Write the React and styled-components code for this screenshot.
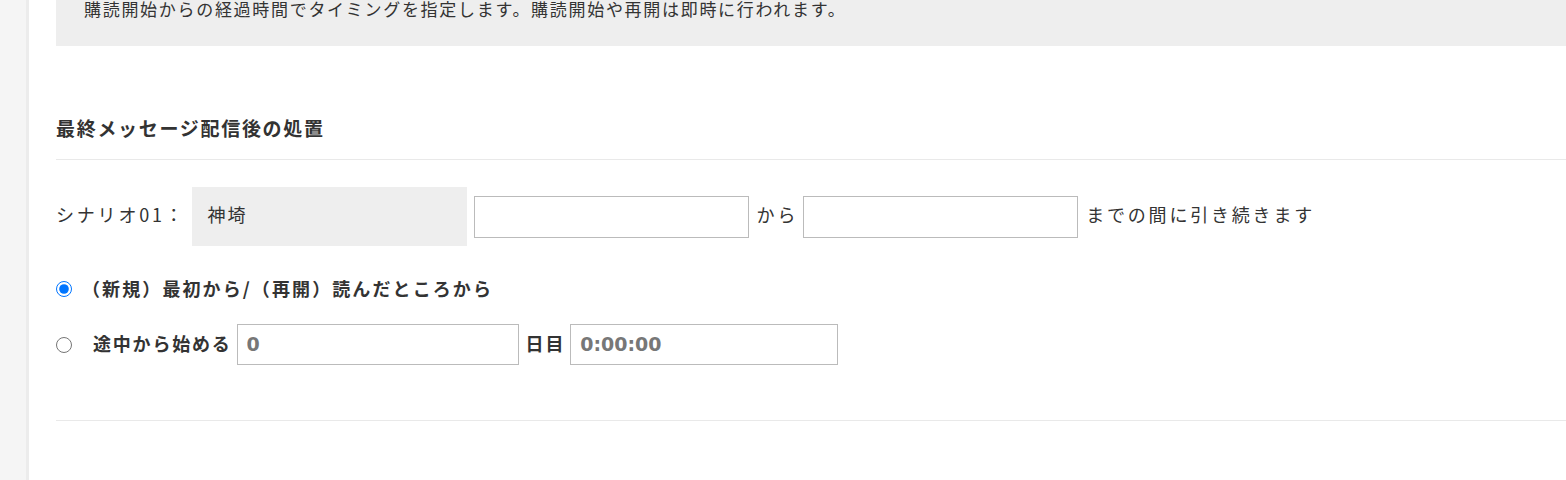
import React from 'react';
import styled, { createGlobalStyle } from 'styled-components';

const Global = createGlobalStyle`
  html, body { margin: 0; padding: 0; background: #fff; }
  body {
    font-family: "Noto Sans CJK JP", "Noto Sans", sans-serif;
    color: #333;
  }
  * { box-sizing: border-box; }
`;

const Page = styled.div`
  display: flex;
  min-height: 480px;
  overflow: hidden;
`;

const Sidebar = styled.aside`
  width: 29px;
  flex-shrink: 0;
  background: #f5f5f5;
  border-right: 3px solid #ececec;
`;

const Main = styled.main`
  flex: 1;
  padding-left: 27px;
  display: flex;
  flex-direction: column;
`;

const Notice = styled.div`
  background: #eeeeee;
  height: 46px;
  padding: 0 28px;
  font-size: 17px;
  line-height: 17px;
  letter-spacing: 1.7px;
  color: #333;
  white-space: nowrap;
`;

const Heading = styled.h2`
  margin: 68px 0 0;
  padding-bottom: 17px;
  border-bottom: 1px solid #e9e9e9;
  font-size: 19px;
  line-height: 28px;
  font-weight: 700;
  letter-spacing: 1.7px;
  color: #333;
`;

const ScenarioRow = styled.div`
  margin-top: 27px;
  display: flex;
  align-items: center;
  height: 59px;
  font-size: 18px;
  letter-spacing: 2.8px;
  color: #333;
`;

const Text = styled.span`
  margin-right: ${p => p.$mr || 0}px;
  padding-bottom: ${p => p.$lift || 0}px;
  white-space: nowrap;
`;

const NameBox = styled.div`
  width: 275px;
  height: 59px;
  background: #eeeeee;
  display: flex;
  align-items: center;
  padding: 0 0 5px 16px;
  margin-right: 7px;
  letter-spacing: 2px;
`;

const Field = styled.input`
  width: ${p => p.$w}px;
  height: ${p => p.$h || 42}px;
  border: 1px solid #bbbbbb;
  border-radius: 0;
  background: #fff;
  margin: 0 ${p => p.$mr || 0}px 0 0;
  padding: 0 9px 2px;
  font-family: "DejaVu Sans", sans-serif;
  font-weight: 700;
  font-size: 19px;
  letter-spacing: 0;
  color: #777;
  outline: none;
`;

const RadioRow = styled.label`
  display: flex;
  align-items: center;
  height: ${p => p.$h}px;
  margin-top: ${p => p.$mt}px;
  font-size: 18px;
  font-weight: 700;
  letter-spacing: ${p => p.$ls}px;
  color: #333;
`;

const Radio = styled.input`
  width: 16px;
  height: 16px;
  margin: 0 ${p => p.$gap}px 0 0;
  flex-shrink: 0;
`;

const Divider = styled.hr`
  margin: 55px 0 0;
  border: 0;
  border-top: 1px solid #e9e9e9;
  height: 0;
`;

export default function App() {
  return (
    <>
      <Global />
      <Page>
        <Sidebar />
        <Main>
          <Notice>購読開始からの経過時間でタイミングを指定します。購読開始や再開は即時に行われます。</Notice>
          <Heading>最終メッセージ配信後の処置</Heading>
          <ScenarioRow>
            <Text $mr={6} $lift={5}>シナリオ01：</Text>
            <NameBox>神埼</NameBox>
            <Field $w={275} $mr={8} />
            <Text $mr={5} $lift={5}>から</Text>
            <Field $w={275} $mr={8} />
            <Text $lift={5}>までの間に引き続きます</Text>
          </ScenarioRow>
          <RadioRow $h={30} $mt={28} $ls={2.1}>
            <Radio type="radio" name="start" defaultChecked $gap={10} />
            <Text $lift={2}>（新規）最初から/（再開）読んだところから</Text>
          </RadioRow>
          <RadioRow $h={41} $mt={20} $ls={1.8}>
            <Radio type="radio" name="start" $gap={21} />
            <Text $mr={5} $lift={4}>途中から始める</Text>
            <Field $w={282} $h={41} $mr={7} defaultValue="0" />
            <Text $mr={5} $lift={4}>日目</Text>
            <Field $w={268} $h={41} defaultValue="0:00:00" />
          </RadioRow>
          <Divider />
        </Main>
      </Page>
    </>
  );
}
